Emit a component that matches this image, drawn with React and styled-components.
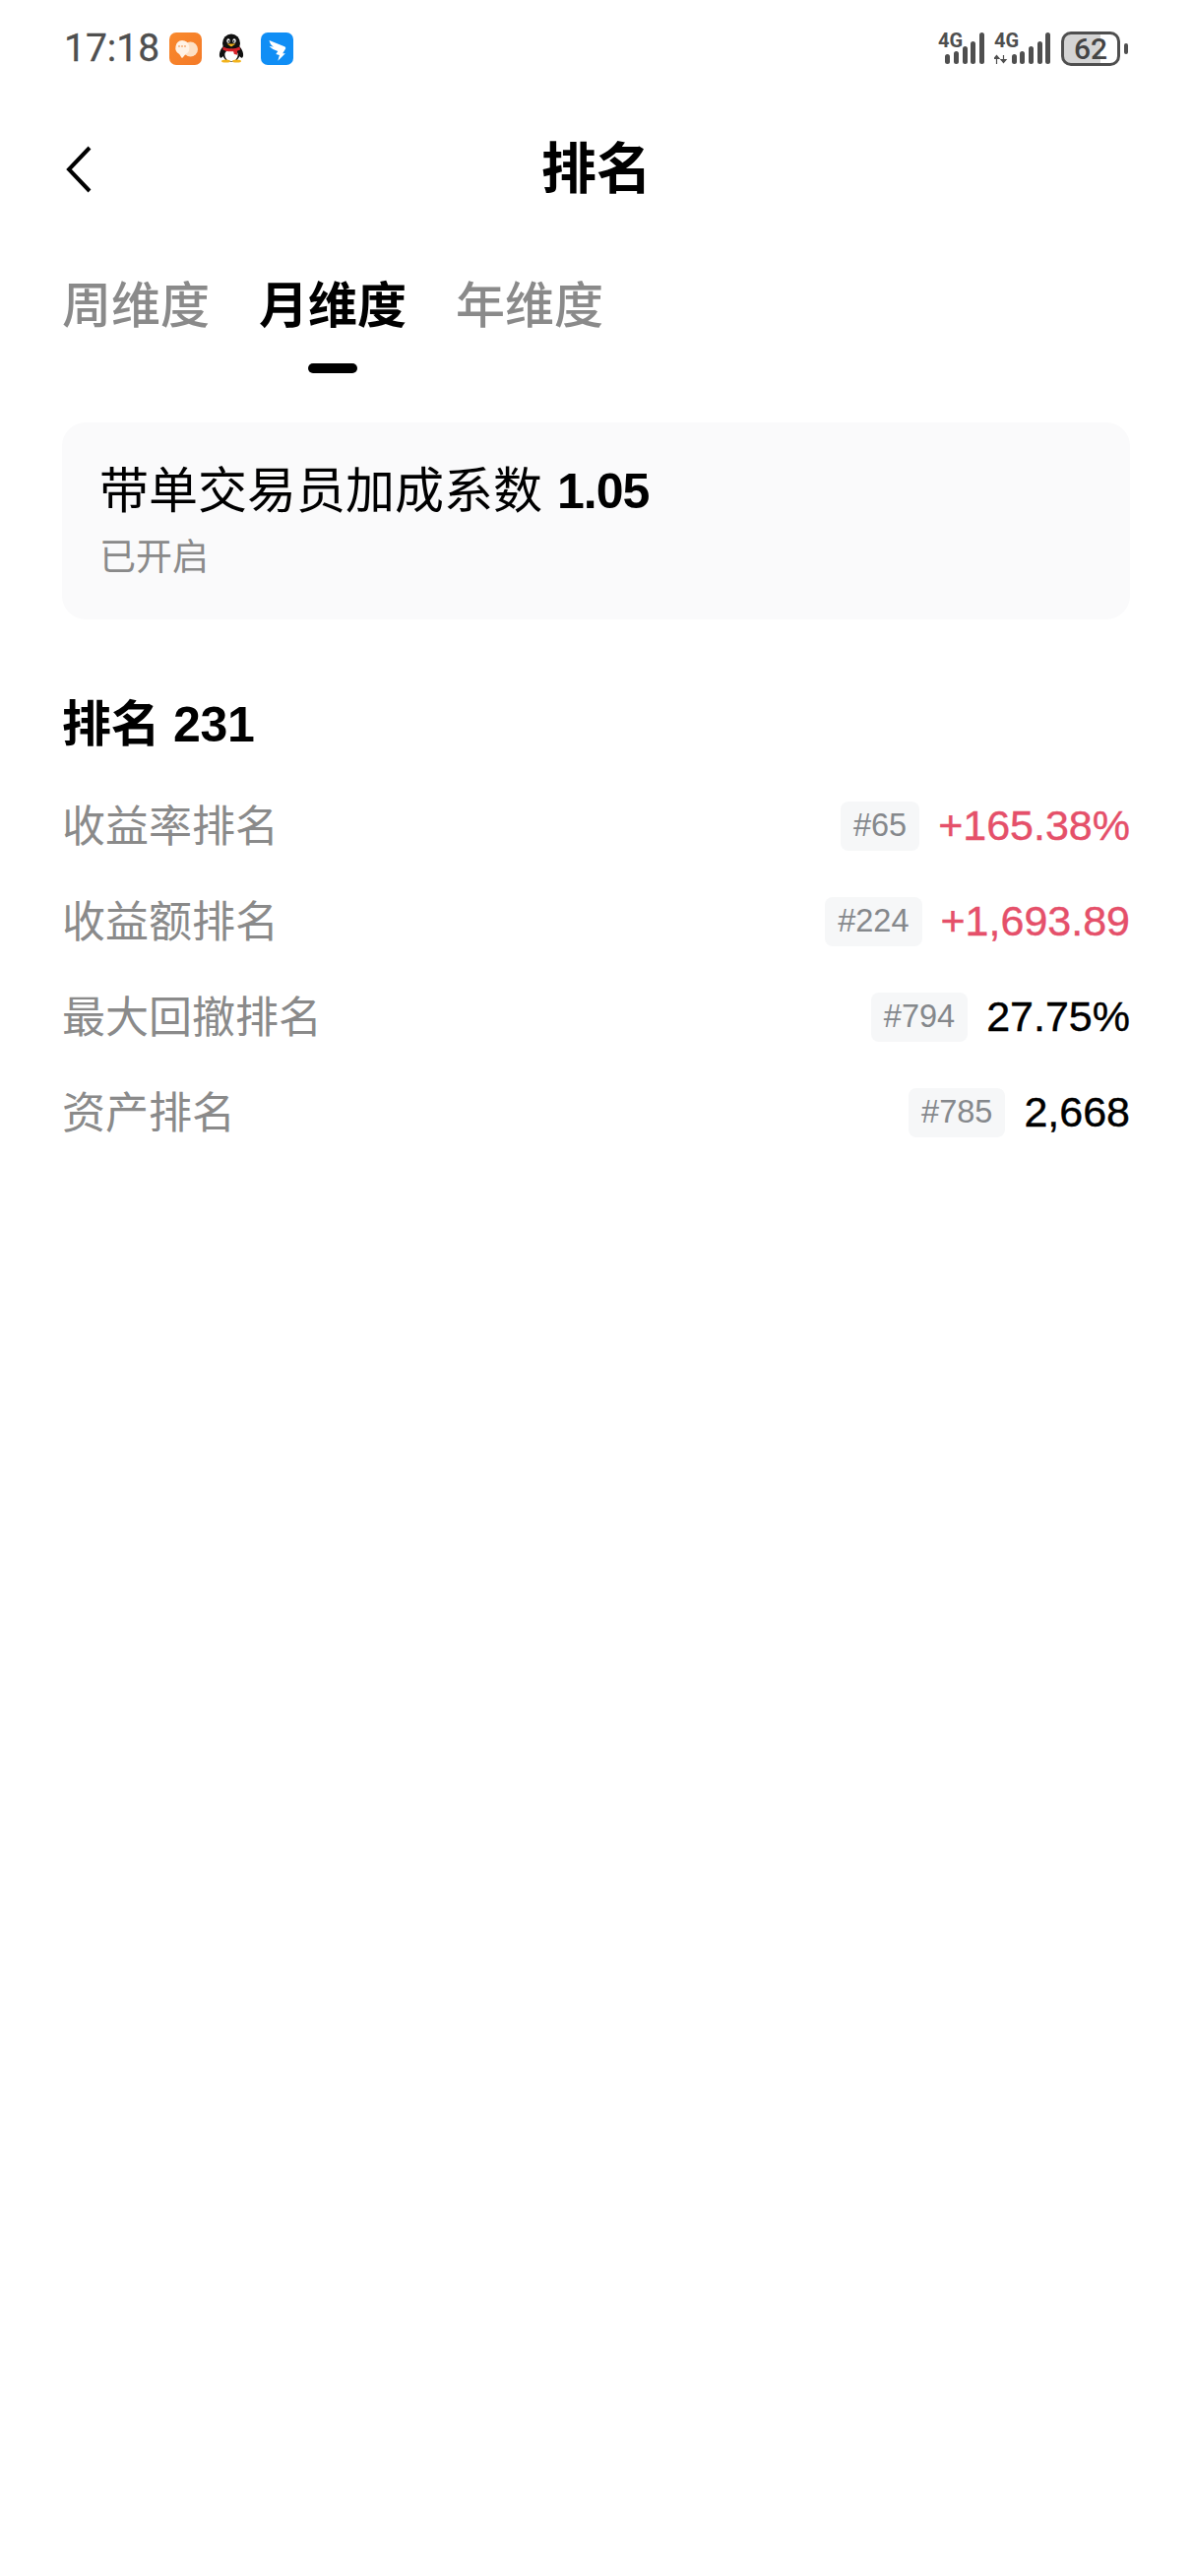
import React from "react";
import styled, { createGlobalStyle } from "styled-components";

const Global = createGlobalStyle`
  html, body { margin: 0; padding: 0; background: #fff; }
  body { font-family: "Liberation Sans", "Noto Sans CJK SC", sans-serif; color: #000; }
  * { box-sizing: border-box; }
`;

const Page = styled.div`
  width: 1212px;
  min-height: 2616px;
  background: #fff;
`;

const StatusBar = styled.div`
  height: 98px;
  padding: 0 74px 0 65px;
  display: flex;
  align-items: center;
  justify-content: space-between;
`;

const StatusLeft = styled.div`
  display: flex;
  align-items: center;
`;

const Clock = styled.span`
  font-family: Roboto, sans-serif;
  font-size: 39px;
  color: #4f4f4f;
  width: 107px;
  -webkit-text-stroke: 0.3px #4f4f4f;
`;

const NotifyIcon = styled.svg`
  display: block;
  margin-right: ${(p) => p.$gap}px;
`;

const StatusRight = styled.div`
  display: flex;
  align-items: center;
  gap: 10px;
`;

const SignalSvg = styled.svg`
  display: block;
`;

const Battery = styled.div`
  position: relative;
  width: 60px;
  height: 35px;
  margin-left: 1px;
  border: 3px solid #4f4f4f;
  border-radius: 10px;
  background: linear-gradient(90deg, #d4d4d4 0 68%, #fff 68% 100%);
  display: flex;
  align-items: center;
  justify-content: center;
  font-family: Roboto, sans-serif;
  font-size: 30px;
  font-weight: 500;
  color: #444;
  &::after {
    content: "";
    position: absolute;
    right: -11px;
    top: 9px;
    width: 4px;
    height: 11px;
    border-radius: 2px;
    background: #4f4f4f;
  }
`;

const Header = styled.div`
  height: 148px;
  padding: 0 63px;
  display: grid;
  grid-template-columns: 1fr auto 1fr;
  align-items: center;
`;

const Title = styled.h1`
  margin: 0;
  font-size: 56px;
  font-weight: 700;
  line-height: 70px;
`;

const BackIcon = styled.svg`
  display: block;
  margin-left: 3px;
`;

const Content = styled.main`
  padding: 33px 64px 0 63px;
`;

const Tabs = styled.nav`
  display: flex;
  gap: 50px;
`;

const Tab = styled.div`
  display: flex;
  flex-direction: column;
  align-items: center;
  gap: 26px;
  font-size: 50px;
  line-height: 64px;
  font-weight: ${(p) => (p.$active ? 700 : 500)};
  color: ${(p) => (p.$active ? "#000" : "#8a8a8a")};
`;

const TabMark = styled.span`
  width: 50px;
  height: 10px;
  border-radius: 5px;
  background: ${(p) => (p.$active ? "#000" : "transparent")};
`;

const BonusCard = styled.section`
  margin-top: 50px;
  height: 200px;
  padding: 40px 38px 0;
  background: #fafafb;
  border-radius: 24px;
`;

const BonusTitle = styled.div`
  font-size: 50px;
  line-height: 60px;
  display: flex;
  align-items: center;
  gap: 15px;
`;

const BonusValue = styled.span`
  font-size: 50px;
  font-weight: 700;
  letter-spacing: -1px;
`;

const BonusState = styled.div`
  margin-top: 14px;
  font-size: 37px;
  line-height: 48px;
  color: #8a8a8a;
`;

const RankHeading = styled.h2`
  margin: 77px 0 24px;
  font-size: 50px;
  line-height: 60px;
  font-weight: 700;
  letter-spacing: -0.3px;
`;

const Row = styled.div`
  height: 97px;
  display: flex;
  align-items: center;
  justify-content: space-between;
`;

const RowLabel = styled.span`
  font-size: 44px;
  color: #8a8a8a;
  padding-bottom: 6px;
`;

const RowRight = styled.div`
  display: flex;
  align-items: center;
  gap: 19px;
`;

const RankBadge = styled.span`
  height: 50px;
  padding: 0 13px;
  display: flex;
  align-items: center;
  background: #f6f7f8;
  border-radius: 8px;
  font-size: 32.5px;
  color: #85888c;
`;

const RowValue = styled.span`
  font-size: 43px;
  color: ${(p) => (p.$up ? "#e5506a" : "#000")};
  -webkit-text-stroke: 0.4px ${(p) => (p.$up ? "#e5506a" : "#000")};
`;

const ChatIcon = () => (
  <NotifyIcon width="33" height="33" viewBox="0 0 33 33" $gap={17}>
    <defs>
      <linearGradient id="chatBg" x1="0" y1="0" x2="1" y2="1">
        <stop offset="0" stopColor="#f9892c" />
        <stop offset="1" stopColor="#f47a28" />
      </linearGradient>
    </defs>
    <rect width="33" height="33" rx="7" fill="url(#chatBg)" />
    <circle cx="21.5" cy="17" r="7.5" fill="#fde0c4" />
    <path d="M13 8a7.5 7.5 0 0 1 3.6 14l-3 3.4a.8.8 0 0 1-1.2 0l-2.2-3.4A7.5 7.5 0 0 1 13 8z" fill="#fff3e6" />
    <circle cx="10" cy="14" r="0.9" fill="#f6a86a" />
    <circle cx="13" cy="14" r="0.9" fill="#f6a86a" />
    <circle cx="16" cy="14" r="0.9" fill="#f6a86a" />
  </NotifyIcon>
);

const PenguinIcon = () => (
  <NotifyIcon width="26" height="30" viewBox="0 0 26 30" $gap={17}>
    <ellipse cx="4" cy="19" rx="2.6" ry="6" fill="#111" transform="rotate(18 4 19)" />
    <ellipse cx="22" cy="19" rx="2.6" ry="6" fill="#111" transform="rotate(-18 22 19)" />
    <ellipse cx="13" cy="10" rx="9" ry="9.5" fill="#111" />
    <ellipse cx="13" cy="21" rx="8.6" ry="7.8" fill="#111" />
    <ellipse cx="13" cy="22" rx="6.6" ry="6.2" fill="#fff" />
    <ellipse cx="10" cy="7.5" rx="1.7" ry="2.3" fill="#fff" />
    <ellipse cx="16" cy="7.5" rx="1.7" ry="2.3" fill="#fff" />
    <circle cx="10.4" cy="7.8" r="0.9" fill="#111" />
    <circle cx="15.6" cy="7.8" r="0.9" fill="#111" />
    <path d="M8.5 10.5h9l-4.5 3z" fill="#f2b31c" />
    <path d="M4.5 13.5c5 2.6 12 2.6 17 0l.6 3-3.2 1.3.4 4-3.4-.8-.8-2.8c-2.5.3-5 .2-7-.3l-3.8-1.4z" fill="#d8232a" />
    <ellipse cx="7.5" cy="28" rx="4.5" ry="1.6" fill="#f2b31c" />
    <ellipse cx="18.5" cy="28" rx="4.5" ry="1.6" fill="#f2b31c" />
  </NotifyIcon>
);

const WingIcon = () => (
  <NotifyIcon width="33" height="33" viewBox="0 0 33 33" $gap={0}>
    <rect width="33" height="33" rx="7" fill="#108ef5" />
    <path d="M8.5 8l15.5 6.2c1.3.6 1.5 1.6.8 2.8l-2.600 4.200h2.700l-7.600 7.600 1.600-5.900-3.600-.9 2-3.100c-3.500-1-6.600-2.600-8.800-5.200 1.500.5 3 .8 4.400.9C10.300 13 9 10.500 8.500 8z" fill="#fff" />
  </NotifyIcon>
);

// Five rising bars; tops are measured from the bar area's upper edge.
const BAR_TOPS = [23, 20, 15, 10, 1];

// The canvas has spare room above and below so the 4G label's line box fits inside it.
const SignalIcon = ({ width, barX, transfer }) => (
  <SignalSvg width={width} height="46" viewBox={`0 -6 ${width} 46`}>
    <text x="0" y="16" fontFamily="Roboto, sans-serif" fontWeight="700" fontSize="20" fill="#4f4f4f">4G</text>
    {transfer && (
      <path d="M0 27.500h5l-2.500-3zM2.500 27v6M7 28.500h5l-2.500 3zM9.500 24v5" stroke="#4f4f4f" strokeWidth="1.200" fill="#4f4f4f" />
    )}
    {barX.map((x, i) => (
      <rect key={x} x={x} y={BAR_TOPS[i]} width="5" height={33 - BAR_TOPS[i]} rx="2.500" fill="#4f4f4f" />
    ))}
  </SignalSvg>
);

const rows = [
  { label: "收益率排名", rank: "#65", value: "+165.38%", up: true },
  { label: "收益额排名", rank: "#224", value: "+1,693.89", up: true },
  { label: "最大回撤排名", rank: "#794", value: "27.75%" },
  { label: "资产排名", rank: "#785", value: "2,668" },
];

const tabs = [
  { label: "周维度" },
  { label: "月维度", active: true },
  { label: "年维度" },
];

export default function App() {
  return (
    <Page>
      <Global />
      <StatusBar>
        <StatusLeft>
          <Clock>17:18</Clock>
          <ChatIcon />
          <PenguinIcon />
          <WingIcon />
        </StatusLeft>
        <StatusRight>
          <SignalIcon width={47} barX={[7, 16, 25, 33, 42]} />
          <SignalIcon width={57} barX={[18, 26, 35, 44, 52]} transfer />
          <Battery>62</Battery>
        </StatusRight>
      </StatusBar>
      <Header>
        <BackIcon width="28" height="50" viewBox="0 0 28 50">
          <path d="M25 3L4 25l21 22" fill="none" stroke="#000" strokeWidth="4" />
        </BackIcon>
        <Title>排名</Title>
      </Header>
      <Content>
        <Tabs>
          {tabs.map((t) => (
            <Tab key={t.label} $active={t.active}>
              {t.label}
              <TabMark $active={t.active} />
            </Tab>
          ))}
        </Tabs>
        <BonusCard>
          <BonusTitle>
            带单交易员加成系数
            <BonusValue>1.05</BonusValue>
          </BonusTitle>
          <BonusState>已开启</BonusState>
        </BonusCard>
        <RankHeading>排名 231</RankHeading>
        {rows.map((r) => (
          <Row key={r.label}>
            <RowLabel>{r.label}</RowLabel>
            <RowRight>
              <RankBadge>{r.rank}</RankBadge>
              <RowValue $up={r.up}>{r.value}</RowValue>
            </RowRight>
          </Row>
        ))}
      </Content>
    </Page>
  );
}
